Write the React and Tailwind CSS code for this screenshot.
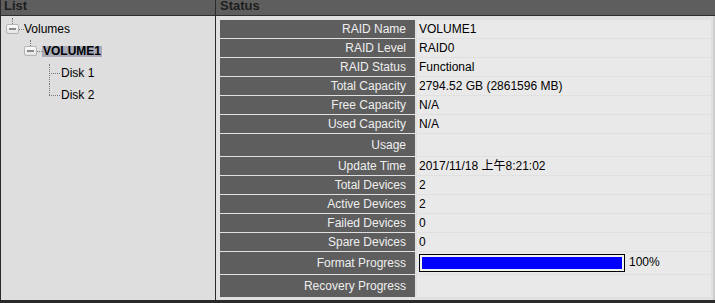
import React from 'react'

const rows = [
  { label: 'RAID Name', value: 'VOLUME1' },
  { label: 'RAID Level', value: 'RAID0' },
  { label: 'RAID Status', value: 'Functional' },
  { label: 'Total Capacity', value: '2794.52 GB (2861596 MB)' },
  { label: 'Free Capacity', value: 'N/A' },
  { label: 'Used Capacity', value: 'N/A' },
  { label: 'Usage', value: '', h: 'h-[22px]' },
  { label: 'Update Time', value: '2017/11/18 上午8:21:02' },
  { label: 'Total Devices', value: '2' },
  { label: 'Active Devices', value: '2' },
  { label: 'Failed Devices', value: '0' },
  { label: 'Spare Devices', value: '0' },
  { label: 'Format Progress', progress: 100, h: 'h-[22px]' },
  { label: 'Recovery Progress', value: '', h: 'h-[22px]' },
]

function MinusBox() {
  return (
    <div className="relative w-[13px] h-[10px] rounded-[2px] border border-[#b4b4b4] bg-gradient-to-b from-[#fbfbfb] to-[#e4e4e4] flex items-center justify-center shrink-0">
      <div className="w-[7px] h-[2px] bg-[#8a8a8a]" />
      {/* stub going up */}
      <div className="absolute left-[5px] -top-[7px] h-[6px] border-l border-dotted border-[#7a7a7a]" />
    </div>
  )
}

function Tree() {
  return (
    <div className="pt-[2px] text-[12px] text-black">
      <div className="flex items-center h-[22px] pl-[5px]">
        <MinusBox />
        <div className="w-[5px] border-t border-dotted border-[#7a7a7a]" />
        <span>Volumes</span>
      </div>
      <div className="flex items-center h-[22px] pl-[23px]">
        <MinusBox />
        <div className="w-[5px] border-t border-dotted border-[#7a7a7a]" />
        <span className="font-bold bg-[#a9abb9] leading-[11px] px-px">VOLUME1</span>
      </div>
      <div className="pl-[48px]">
        <div className="relative flex items-center h-[22px]">
          <div className="absolute left-0 top-[2px] bottom-0 border-l border-dotted border-[#7a7a7a]" />
          <div className="w-[11px] border-t border-dotted border-[#7a7a7a]" />
          <span className="pl-px">Disk 1</span>
        </div>
        <div className="relative flex items-center h-[22px]">
          <div className="absolute left-0 top-0 h-[11px] border-l border-dotted border-[#7a7a7a]" />
          <div className="w-[11px] border-t border-dotted border-[#7a7a7a]" />
          <span className="pl-px">Disk 2</span>
        </div>
      </div>
    </div>
  )
}

function Progress({ pct }) {
  return (
    <div className="flex items-center gap-[4px]">
      <div className="w-[206px] h-[18px] border border-black bg-[#f2f2f2] p-[2px]">
        <div className="h-full bg-[#0000ff]" style={{ width: `${pct}%` }} />
      </div>
      <span className="mb-[3px]">{pct}%</span>
    </div>
  )
}

export default function App() {
  return (
    <div
      className="w-[715px] h-[303px] flex flex-col bg-[#dedede] border-l border-b-[3px] border-[#2a2a2a] overflow-hidden"
      style={{ fontFamily: '"Liberation Sans", Arial, "Noto Sans CJK TC", sans-serif' }}
    >
      {/* Header */}
      <div className="flex h-[16px] shrink-0 bg-[#5e5e5e] border-b border-[#2e2e2e] overflow-hidden text-[13px] font-bold text-[#1e1e1e]">
        <div className="w-[215px] border-r border-[#2a2a2a] pl-[3px]">
          <div className="-mt-[1px] leading-[13px]">List</div>
        </div>
        <div className="flex-1 pl-[4px]">
          <div className="-mt-[1px] leading-[13px]">Status</div>
        </div>
      </div>

      {/* Body */}
      <div className="flex flex-1 min-h-0">
        <div className="w-[215px] border-r border-[#2a2a2a] bg-[#dedede]">
          <Tree />
        </div>
        <div className="flex-1 bg-[#e0e0e0] border-r-2 border-[#cdcdcd] pt-[4px] pl-[4px]">
          <div className="grid grid-cols-[195px_294px] gap-x-[2px] gap-y-px text-[12px]">
            {rows.map((r) => (
              <React.Fragment key={r.label}>
                <div className={`${r.h || 'h-[18px]'} bg-[#5e5e5e] text-[#efefef] flex items-center justify-end pr-[9px]`}>
                  {r.label}
                </div>
                <div className={`${r.h || 'h-[18px]'} bg-[#e9e9e9] text-black flex items-center pl-[2px]`}>
                  {r.progress != null ? <Progress pct={r.progress} /> : r.value}
                </div>
              </React.Fragment>
            ))}
          </div>
        </div>
      </div>
    </div>
  )
}
